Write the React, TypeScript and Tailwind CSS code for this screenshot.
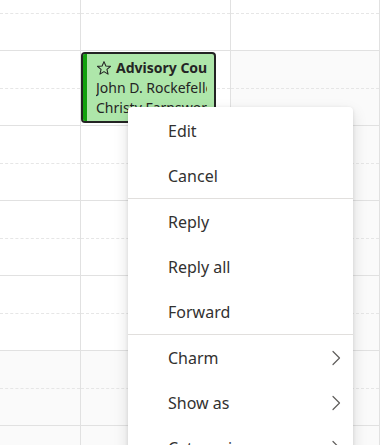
import React from "react";

const font = { fontFamily: '"Noto Sans", "Open Sans", sans-serif' };

function Chevron() {
  return (
    <svg width="10" height="16" viewBox="0 0 10 16" fill="none">
      <path d="M2 1.5 L8.5 8 L2 14.5" stroke="#605e5c" strokeWidth="1.2" strokeLinecap="round" strokeLinejoin="round" />
    </svg>
  );
}

function Star() {
  return (
    <svg width="16" height="16" viewBox="0 0 24 24" fill="none" className="shrink-0 mr-[4px]">
      <path
        d="M12 2.5 L14.8 9.1 L21.8 9.6 L16.4 14.2 L18.1 21.2 L12 17.4 L5.9 21.2 L7.6 14.2 L2.2 9.6 L9.2 9.1 Z"
        stroke="#242424"
        strokeWidth="1.6"
        strokeLinejoin="round"
      />
    </svg>
  );
}

function Cell({ grey, children }: { grey?: boolean; children?: React.ReactNode }) {
  return (
    <div className={`relative h-[75px] border-r border-b border-[#e1e1e1] ${grey ? "bg-[#fafafa]" : "bg-white"}`}>
      <div className="absolute left-0 right-0 top-[37px] border-t border-dashed border-[#e6e6e6]" />
      {children}
    </div>
  );
}

export default function App() {
  const rows = 7;
  const items1 = ["Edit", "Cancel"];
  const items2 = ["Reply", "Reply all", "Forward"];
  const items3 = ["Charm", "Show as", "Categorize"];
  return (
    <div className="relative w-[380px] h-[445px] overflow-hidden bg-white" style={font}>
      <div className="grid grid-cols-[81px_150px_1fr] mt-[-24px]">
        {Array.from({ length: rows }).map((_, r) => (
          <React.Fragment key={r}>
            <Cell grey={r >= 5} />
            <Cell grey={r >= 5}>
              {r === 1 && (
                <div className="absolute left-0 top-[1px] w-[135px] h-[71px] z-10 rounded-[4px] border-2 border-[#242424] bg-[#aee6aa] flex overflow-hidden">
                  <div className="w-[4px] bg-[#13a10e] shrink-0" />
                  <div className="ml-[9px] mr-[7px] mt-[4px] flex flex-col text-[14px] leading-[20px] text-[#242424] whitespace-nowrap overflow-hidden">
                    <div className="flex items-center font-bold">
                      <Star />
                      <span>Advisory Council</span>
                    </div>
                    <div>John D. Rockefeller</div>
                    <div>Christy Farnsworth</div>
                  </div>
                </div>
              )}
            </Cell>
            <Cell grey={r >= 1} />
          </React.Fragment>
        ))}
      </div>
      <div className="absolute left-[128px] top-[107px] w-[225px] z-20 bg-white rounded-[4px] pt-[1px] shadow-[0_6.4px_14.4px_0_rgba(0,0,0,0.13),0_1.2px_3.6px_0_rgba(0,0,0,0.11)] text-[16px] text-[#323130]">
        {items1.map((t) => (
          <div key={t} className="h-[45px] flex items-center pl-[40px]">{t}</div>
        ))}
        <div className="h-px bg-[#e1dfdd]" />
        {items2.map((t) => (
          <div key={t} className="h-[45px] flex items-center pl-[40px]">{t}</div>
        ))}
        <div className="h-px bg-[#e1dfdd]" />
        {items3.map((t) => (
          <div key={t} className="h-[45px] flex items-center justify-between pl-[40px] pr-[12px]">
            <span>{t}</span>
            <Chevron />
          </div>
        ))}
      </div>
    </div>
  );
}
